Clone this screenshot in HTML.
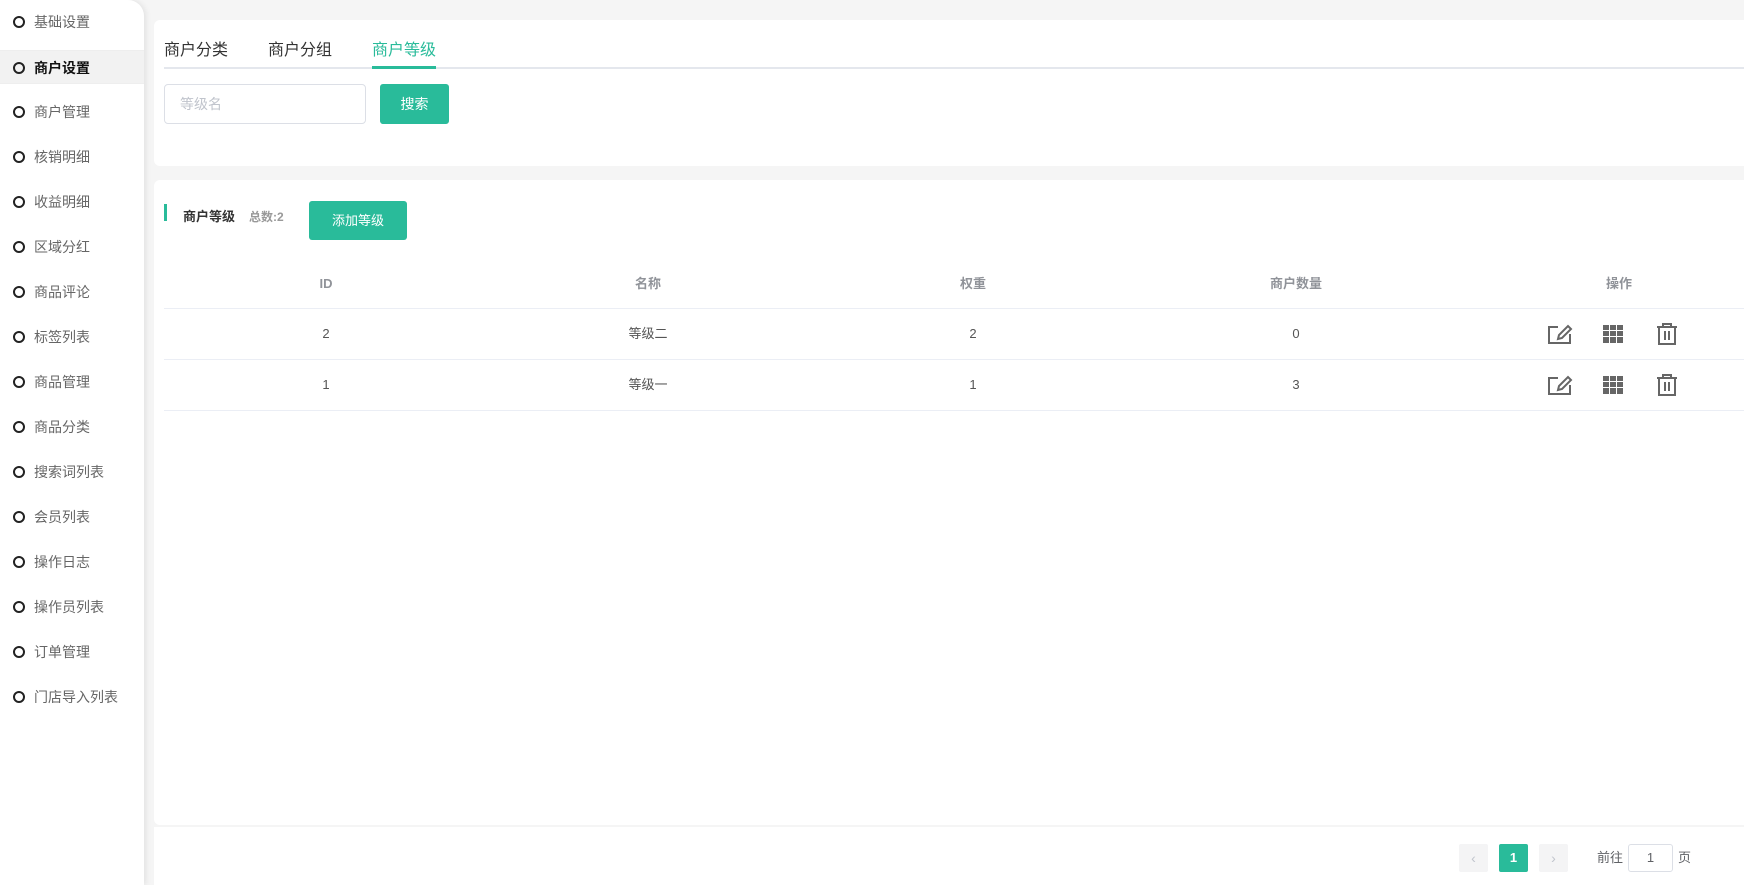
<!DOCTYPE html>
<html><head><meta charset="utf-8"><style>
*{margin:0;padding:0;box-sizing:border-box}
body{width:1744px;height:885px;background:#f5f5f5;font-family:"Liberation Sans","Noto Sans CJK SC",sans-serif;position:relative;overflow:hidden;color:#333}
.side{position:absolute;left:0;top:0;width:144px;height:885px;background:#fff;border-top-right-radius:16px;box-shadow:2px 0 6px rgba(0,0,0,.08)}
.item{position:absolute;left:0;width:144px;height:36px;line-height:36px;font-size:14px;color:#666;padding-left:34px}
.item:before{content:"";position:absolute;left:13px;top:12px;width:12px;height:12px;border:2px solid #222;border-radius:50%;box-sizing:border-box}
.item.act{background:#f2f2f2;color:#111;font-weight:bold;height:34px;line-height:34px;border-top:1px solid #eee;border-bottom:1px solid #eee}
.item.act:before{top:11px}
.card{position:absolute;left:154px;right:0;background:#fff;border-radius:6px 0 0 6px}
.tab{position:absolute;top:40px;height:22px;line-height:22px;font-size:16px;color:#333}
.btn{position:absolute;background:#29bb9a;color:#fff;border-radius:3px;font-size:14px;text-align:center}
.col{position:absolute;font-size:13px;color:#555;width:200px;margin-left:-100px;text-align:center;height:20px;line-height:20px}
.hl{position:absolute;left:164px;right:0;height:1px;background:#ebeef5}
.pg{position:absolute;top:844px;width:29px;height:28px;border-radius:2px;background:#f4f4f5;color:#c0c4cc;text-align:center;line-height:28px;font-size:14px}
</style></head><body>
<div class="side">
<div class="item" style="top:4px">基础设置</div>
<div class="item act" style="top:50px">商户设置</div>
<div class="item" style="top:94px">商户管理</div>
<div class="item" style="top:139px">核销明细</div>
<div class="item" style="top:184px">收益明细</div>
<div class="item" style="top:229px">区域分红</div>
<div class="item" style="top:274px">商品评论</div>
<div class="item" style="top:319px">标签列表</div>
<div class="item" style="top:364px">商品管理</div>
<div class="item" style="top:409px">商品分类</div>
<div class="item" style="top:454px">搜索词列表</div>
<div class="item" style="top:499px">会员列表</div>
<div class="item" style="top:544px">操作日志</div>
<div class="item" style="top:589px">操作员列表</div>
<div class="item" style="top:634px">订单管理</div>
<div class="item" style="top:679px">门店导入列表</div>
</div>

<div class="card" style="top:20px;height:146px"></div>
<div class="tab" style="left:164px">商户分类</div>
<div class="tab" style="left:268px">商户分组</div>
<div class="tab" style="left:372px;color:#29bb9a">商户等级</div>
<div style="position:absolute;left:164px;right:0;top:67px;height:2px;background:#e4e7ed"></div>
<div style="position:absolute;left:372px;width:64px;top:66px;height:3px;background:#29bb9a"></div>
<div style="position:absolute;left:164px;top:84px;width:202px;height:40px;border:1px solid #dcdfe6;border-radius:4px;font-size:14px;color:#c0c4cc;line-height:38px;padding-left:15px">等级名</div>
<div class="btn" style="left:380px;top:84px;width:69px;height:40px;line-height:40px">搜索</div>

<div class="card" style="top:180px;height:645px"></div>
<div class="card" style="top:827px;height:58px;border-radius:0"></div>
<div style="position:absolute;left:164px;top:204px;width:3px;height:17px;background:#29bb9a"></div>
<div style="position:absolute;left:183px;top:207px;height:20px;line-height:20px;font-size:13px;font-weight:bold;color:#333">商户等级</div>
<div style="position:absolute;left:249px;top:207px;height:20px;line-height:20px;font-size:12px;font-weight:bold;color:#999">总数:2</div>
<div class="btn" style="left:309px;top:201px;width:98px;height:39px;line-height:39px;font-size:13px">添加等级</div>

<div class="col" style="left:326px;top:274px;font-weight:bold;color:#909399">ID</div>
<div class="col" style="left:648px;top:274px;font-weight:bold;color:#909399">名称</div>
<div class="col" style="left:973px;top:274px;font-weight:bold;color:#909399">权重</div>
<div class="col" style="left:1296px;top:274px;font-weight:bold;color:#909399">商户数量</div>
<div class="col" style="left:1619px;top:274px;font-weight:bold;color:#909399">操作</div>
<div class="hl" style="top:308px"></div>
<div class="col" style="left:326px;top:324px">2</div>
<div class="col" style="left:648px;top:324px">等级二</div>
<div class="col" style="left:973px;top:324px">2</div>
<div class="col" style="left:1296px;top:324px">0</div>
<div class="hl" style="top:359px"></div>
<div class="col" style="left:326px;top:375px">1</div>
<div class="col" style="left:648px;top:375px">等级一</div>
<div class="col" style="left:973px;top:375px">1</div>
<div class="col" style="left:1296px;top:375px">3</div>
<div class="hl" style="top:410px"></div>

<svg style="position:absolute;left:0;top:0" width="1744" height="885">
<g id="ic" fill="none" stroke="#666" stroke-width="2">
<path d="M1558 327h-9v16h21v-9"/><path d="M1558 339l1-4 9-9 3 3-9 9z"/>
<path d="M1657 327h20M1663 327v-3h8v3M1659 327v17h16v-17M1665 331v9M1669 331v9"/>
</g>
<g id="gr" fill="#666"><rect x="1603" y="325" width="6" height="5"/><rect x="1610" y="325" width="6" height="5"/><rect x="1617" y="325" width="6" height="5"/><rect x="1603" y="331" width="6" height="5"/><rect x="1610" y="331" width="6" height="5"/><rect x="1617" y="331" width="6" height="5"/><rect x="1603" y="337" width="6" height="6"/><rect x="1610" y="337" width="6" height="6"/><rect x="1617" y="337" width="6" height="6"/></g>
<use href="#ic" y="51"/>
<use href="#gr" y="51"/>
</svg>

<div class="pg" style="left:1459px">‹</div>
<div class="pg" style="left:1499px;background:#29bb9a;color:#fff;font-weight:bold;font-size:13px">1</div>
<div class="pg" style="left:1539px">›</div>
<div style="position:absolute;left:1597px;top:848px;height:20px;line-height:20px;font-size:13px;color:#606266">前往</div>
<div style="position:absolute;left:1628px;top:844px;width:45px;height:28px;border:1px solid #dcdfe6;border-radius:3px;text-align:center;line-height:26px;font-size:13px;color:#606266">1</div>
<div style="position:absolute;left:1678px;top:848px;height:20px;line-height:20px;font-size:13px;color:#606266">页</div>
</body></html>
